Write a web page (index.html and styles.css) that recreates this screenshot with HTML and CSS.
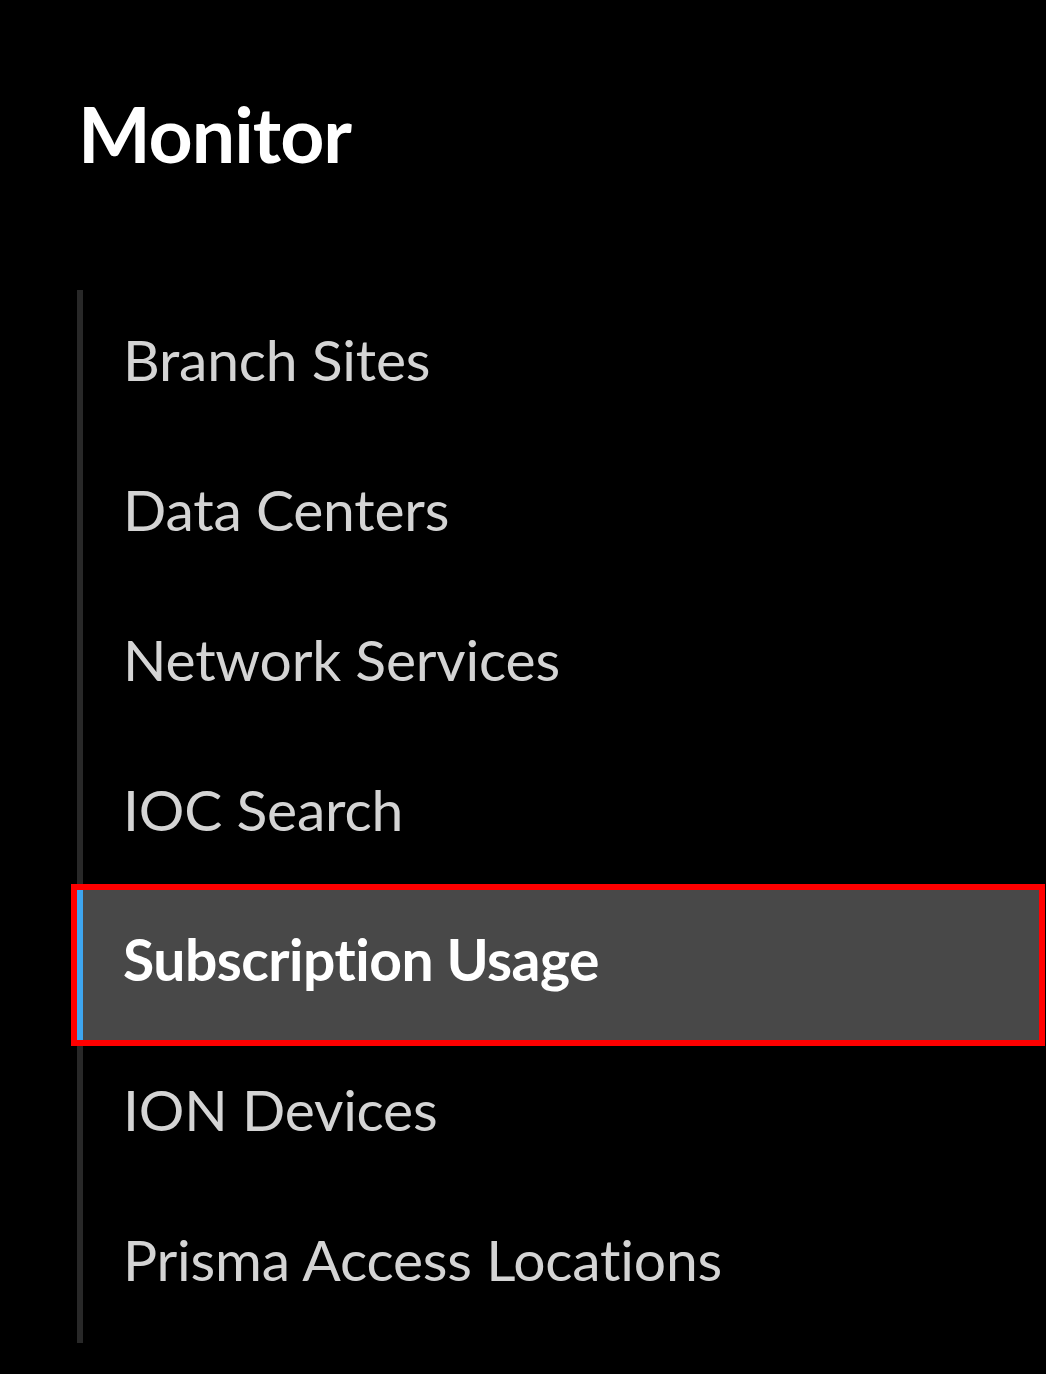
FILE: index.html
```html
<!DOCTYPE html>
<html lang="en">
<head>
    <meta charset="UTF-8">
    <title>Monitor</title>
    <link rel="stylesheet" href="styles.css">
</head>
<body>
<div class="side">
    <h1 class="title">Monitor</h1>
    <ul class="menu">
        <li>Branch Sites</li>
        <li>Data Centers</li>
        <li>Network Services</li>
        <li>IOC Search</li>
        <li class="current">Subscription Usage</li>
        <li>ION Devices</li>
        <li>Prisma Access Locations</li>
    </ul>
</div>
</body>
</html>
```

FILE: styles.css
```css
* {
    padding: 0;
    margin: 0;
    list-style: none;
}

body {
    background: #000;
    font-family: Lato, "Liberation Sans", sans-serif;
    width: 1046px;
    height: 1374px;
    overflow: hidden;
}

.side {
    display: flex;
    flex-direction: column;
}

.title {
    padding: 95px 0 0 78px;
    font-size: 77px;
    line-height: 77px;
    font-weight: bold;
    color: #fff;
    letter-spacing: -1px;
}

.menu {
    margin: 118px 7px 0 77px;
    padding-bottom: 3px;
    border-left: 6px solid #282828;
    display: flex;
    flex-direction: column;
}

.menu li {
    height: 138px;
    padding: 0 0 12px 40px;
    font-size: 57px;
    line-height: 138px;
    letter-spacing: -0.2px;
    color: #d4d4d4;
    white-space: nowrap;
}

.menu li.current {
    margin-left: -6px;
    border-left: 6px solid #3ea6f0;
    background: #484848;
    color: #fff;
    font-weight: bold;
    letter-spacing: -0.5px;
    outline: 6px solid #ff0000;
}
```
